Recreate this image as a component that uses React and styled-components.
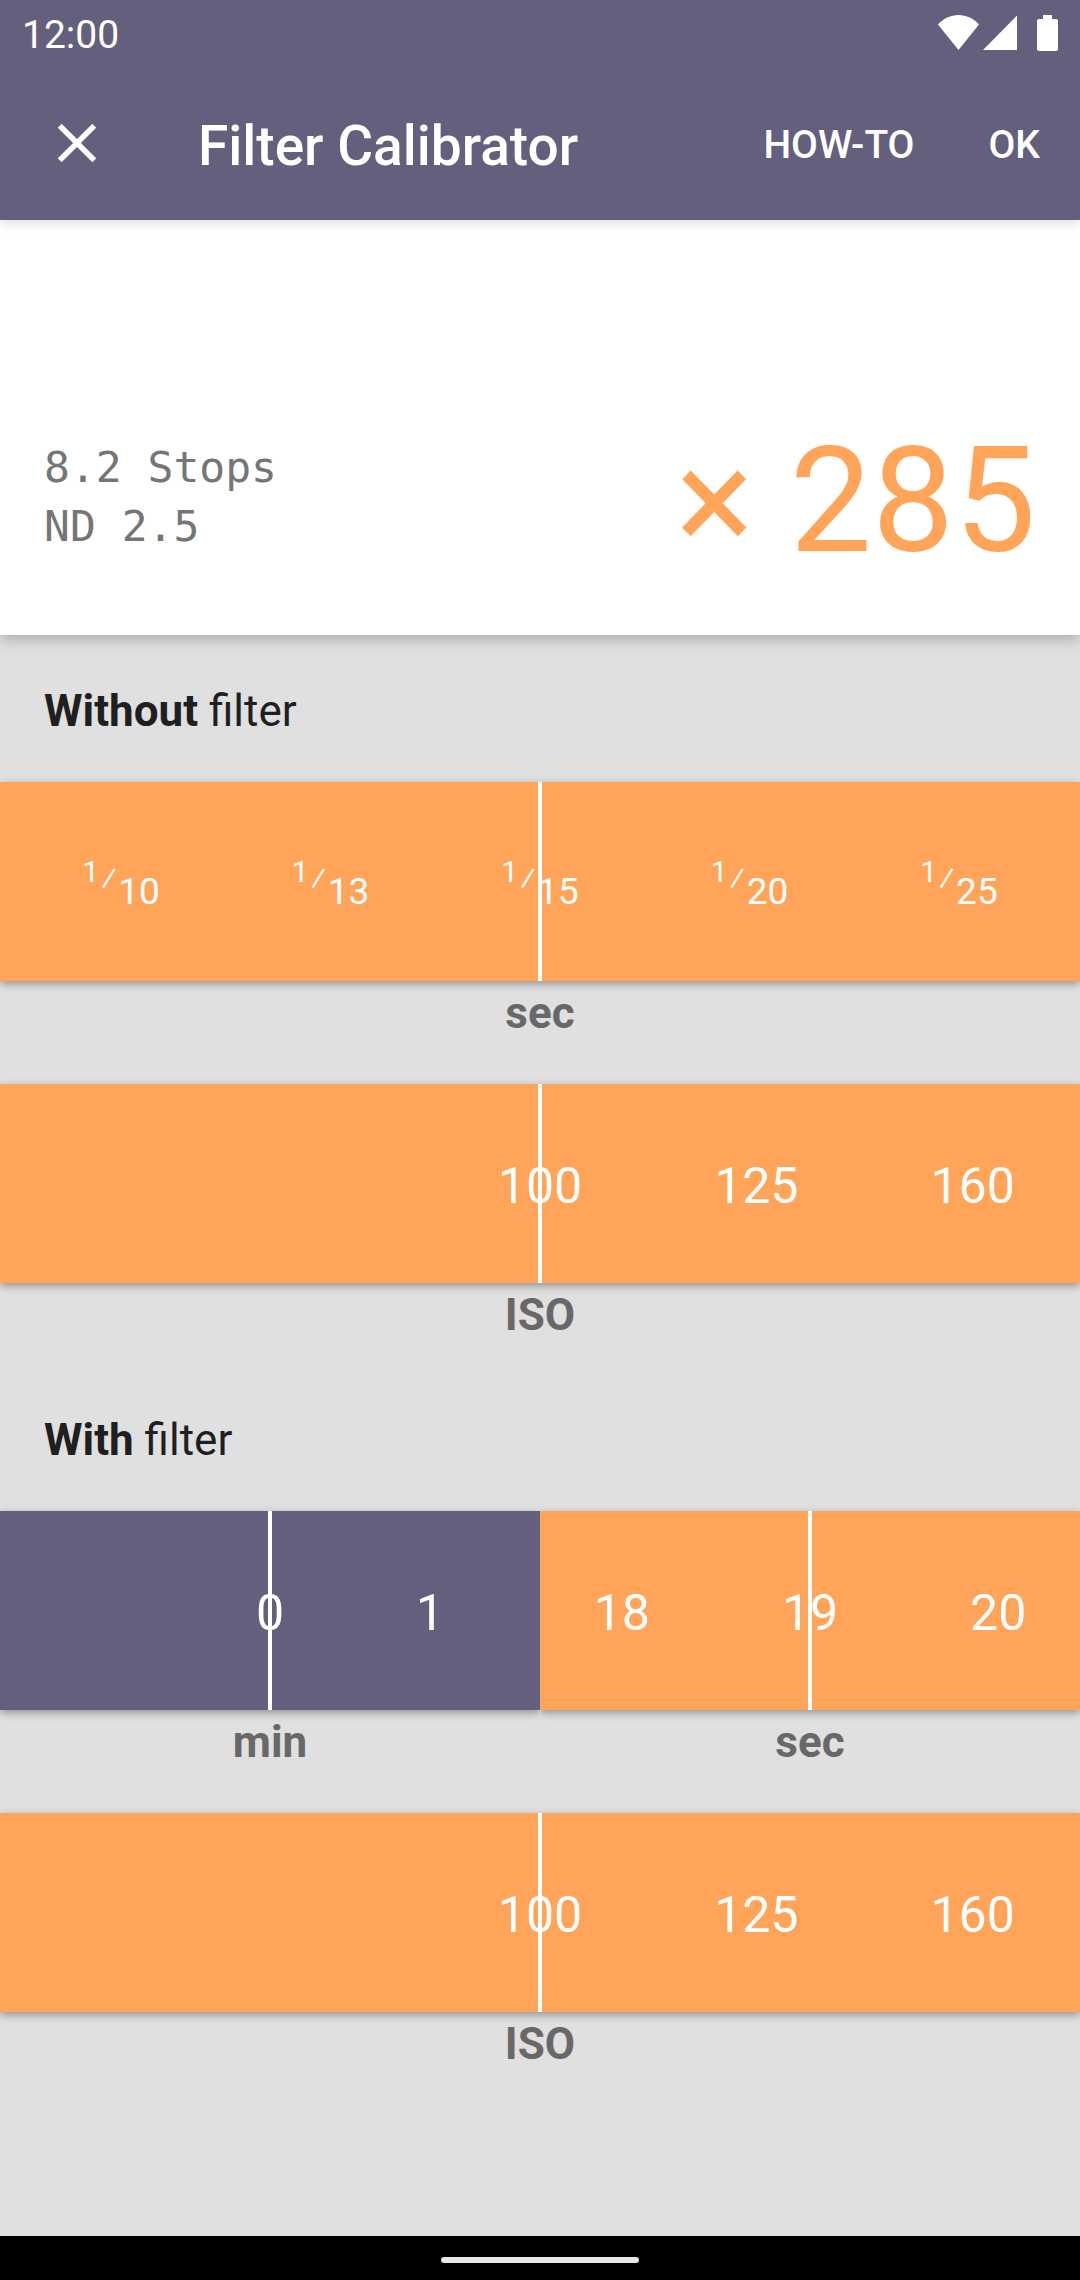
import React, { useId } from 'react';
import styled, { createGlobalStyle } from 'styled-components';

const GlobalStyle = createGlobalStyle`
  *, *::before, *::after { box-sizing: border-box; }
  body {
    margin: 0;
    background: #e0e0e0;
    font-family: Roboto, "Noto Sans", sans-serif;
  }
  button {
    margin: 0;
    padding: 0;
    border: 0;
    background: none;
    color: inherit;
    font: inherit;
    cursor: pointer;
  }
`;

const tones = { violet: '#635f7c', orange: '#ffa459' };

const Screen = styled.div`
  display: flex;
  flex-direction: column;
  min-height: 100vh;
`;

const Header = styled.header`
  position: relative;
  z-index: 1;
  background: ${tones.violet};
  color: #fff;
  box-shadow: 0 4px 10px rgba(0, 0, 0, 0.12);
`;

const StatusBar = styled.div`
  display: flex;
  align-items: center;
  justify-content: space-between;
  height: 66px;
  padding: 0 22px;
`;

const Clock = styled.time`
  padding-top: 4px;
  font-size: 39px;
  line-height: 48px;
`;

const StatusIcons = styled.div`
  display: flex;
  align-items: center;
  gap: 4px;

  svg { display: block; }
  svg:last-child { margin-left: 16px; }
`;

const Toolbar = styled.div`
  display: flex;
  align-items: center;
  height: 154px;
  padding: 0 3px 0 44px;
`;

const CloseButton = styled.button`
  width: 66px;
  height: 66px;

  svg { display: block; }
`;

const Title = styled.h1`
  flex: 1;
  margin: 0 0 0 88px;
  padding-top: 6px;
  font-size: 55px;
  font-weight: 500;
  line-height: 66px;
`;

const MenuButton = styled.button`
  height: 132px;
  padding: 4px 37px 0;
  font-size: 39px;
  font-weight: 500;
`;

const ResultCard = styled.section`
  display: flex;
  align-items: center;
  justify-content: space-between;
  padding: 192px 44px 43px;
  background: #fff;
  box-shadow: 0 4px 14px rgba(0, 0, 0, 0.25);
`;

const Readings = styled.div`
  padding-bottom: 10px;
  color: #757575;
  font-family: "DejaVu Sans Mono", monospace;
  font-size: 43px;
  line-height: 59px;
`;

const Factor = styled.output`
  color: ${tones.orange};
  font-size: 146px;
  line-height: 180px;
`;

const Main = styled.main`
  flex: 1;
  padding-top: 22px;
`;

const SectionTitle = styled.h2`
  margin: 0;
  padding: 28px 44px 45px;
  color: #1f1f1f;
  font-size: 44px;
  font-weight: 400;
  line-height: 52px;

  strong { font-weight: 700; }
`;

const Row = styled.div`
  display: flex;
`;

const Field = styled.div`
  flex: 1 1 0;
  min-width: 0;
`;

const Wheel = styled.div`
  position: relative;
  display: grid;
  grid-template-columns: minmax(0, 1fr) auto minmax(0, 1fr);
  height: 199px;
  background: ${({ $tone }) => tones[$tone]};
  color: #fff;
  box-shadow: 0 3px 8px rgba(0, 0, 0, 0.34);
  clip-path: inset(-12px 0 -16px);
`;

const Side = styled.div`
  display: flex;
  justify-content: ${({ $before }) => ($before ? 'flex-end' : 'flex-start')};
  overflow: hidden;
`;

const Tick = styled.button`
  flex: none;
  padding: 4px 66px 0;
  font-size: 50px;
  line-height: 60px;
`;

const Needle = styled.span`
  position: absolute;
  top: 0;
  bottom: 0;
  left: calc(50% - 2px);
  width: 4px;
  background: #fff;
  pointer-events: none;
`;

const Unit = styled.div`
  height: 103px;
  padding-top: 6px;
  color: #686868;
  font-size: 44px;
  font-weight: 700;
  line-height: 52px;
  text-align: center;
`;

const Fraction = styled.span`
  display: flex;
  justify-content: center;
  align-items: baseline;
  padding-top: 18px;
  font-size: 37px;
  line-height: 60px;
`;

const Numerator = styled.span`
  font-size: 30px;
  transform: translateY(-22px);
`;

const Slash = styled.span`
  padding: 0 2px;
  font-size: 33px;
  transform: translateY(-14px);
`;

const NavBar = styled.footer`
  display: flex;
  align-items: center;
  justify-content: center;
  height: 44px;
  padding-top: 4px;
  background: #000;
`;

const Handle = styled.span`
  width: 198px;
  height: 6px;
  border-radius: 3px;
  background: #e8e6e8;
`;

function Value({ children }) {
  if (!children.startsWith('1/')) return children;
  return (
    <Fraction>
      <Numerator>1</Numerator>
      <Slash>⁄</Slash>
      <span>{children.slice(2)}</span>
    </Fraction>
  );
}

function Ticks({ values }) {
  return values.map((value) => (
    <Tick key={value} type="button">
      <Value>{value}</Value>
    </Tick>
  ));
}

function Picker({ tone = 'orange', before = [], current, after = [], unit }) {
  const id = useId();
  return (
    <Field>
      <Wheel $tone={tone} role="group" aria-labelledby={id}>
        <Side $before>
          <Ticks values={before} />
        </Side>
        <Ticks values={[current]} />
        <Side>
          <Ticks values={after} />
        </Side>
        <Needle />
      </Wheel>
      <Unit id={id}>{unit}</Unit>
    </Field>
  );
}

export default function App() {
  return (
    <Screen>
      <GlobalStyle />
      <Header>
        <StatusBar>
          <Clock>12:00</Clock>
          <StatusIcons>
            <svg width="41" height="36" viewBox="0 0 41 36" fill="#fff" aria-hidden="true">
              <path d="M20.500 35L0 9.500C5.500 3.500 12.500 0 20.500 0S35.500 3.500 41 9.500Z" />
            </svg>
            <svg width="34" height="36" viewBox="0 0 34 36" fill="#fff" aria-hidden="true">
              <path d="M34 0.500V35H0Z" />
            </svg>
            <svg width="21" height="36" viewBox="0 0 21 36" fill="#fff" aria-hidden="true">
              <path d="M6 0h9v4h4a2 2 0 0 1 2 2v28a2 2 0 0 1-2 2H2a2 2 0 0 1-2-2V6a2 2 0 0 1 2-2h4Z" />
            </svg>
          </StatusIcons>
        </StatusBar>
        <Toolbar>
          <CloseButton type="button" aria-label="Close">
            <svg width="66" height="66" viewBox="0 0 24 24" fill="#fff" aria-hidden="true">
              <path d="M19 6.410L17.590 5 12 10.590 6.410 5 5 6.410 10.590 12 5 17.590 6.410 19 12 13.410 17.590 19 19 17.590 13.410 12z" />
            </svg>
          </CloseButton>
          <Title>Filter Calibrator</Title>
          <MenuButton type="button">HOW-TO</MenuButton>
          <MenuButton type="button">OK</MenuButton>
        </Toolbar>
      </Header>

      <ResultCard>
        <Readings>
          <div>8.2 Stops</div>
          <div>ND 2.5</div>
        </Readings>
        <Factor>× 285</Factor>
      </ResultCard>

      <Main>
        <section>
          <SectionTitle>
            <strong>Without</strong> filter
          </SectionTitle>
          <Row>
            <Picker before={['1/10', '1/13']} current="1/15" after={['1/20', '1/25']} unit="sec" />
          </Row>
          <Row>
            <Picker current="100" after={['125', '160']} unit="ISO" />
          </Row>
        </section>
        <section>
          <SectionTitle>
            <strong>With</strong> filter
          </SectionTitle>
          <Row>
            <Picker tone="violet" current="0" after={['1']} unit="min" />
            <Picker before={['18']} current="19" after={['20']} unit="sec" />
          </Row>
          <Row>
            <Picker current="100" after={['125', '160']} unit="ISO" />
          </Row>
        </section>
      </Main>

      <NavBar>
        <Handle />
      </NavBar>
    </Screen>
  );
}
